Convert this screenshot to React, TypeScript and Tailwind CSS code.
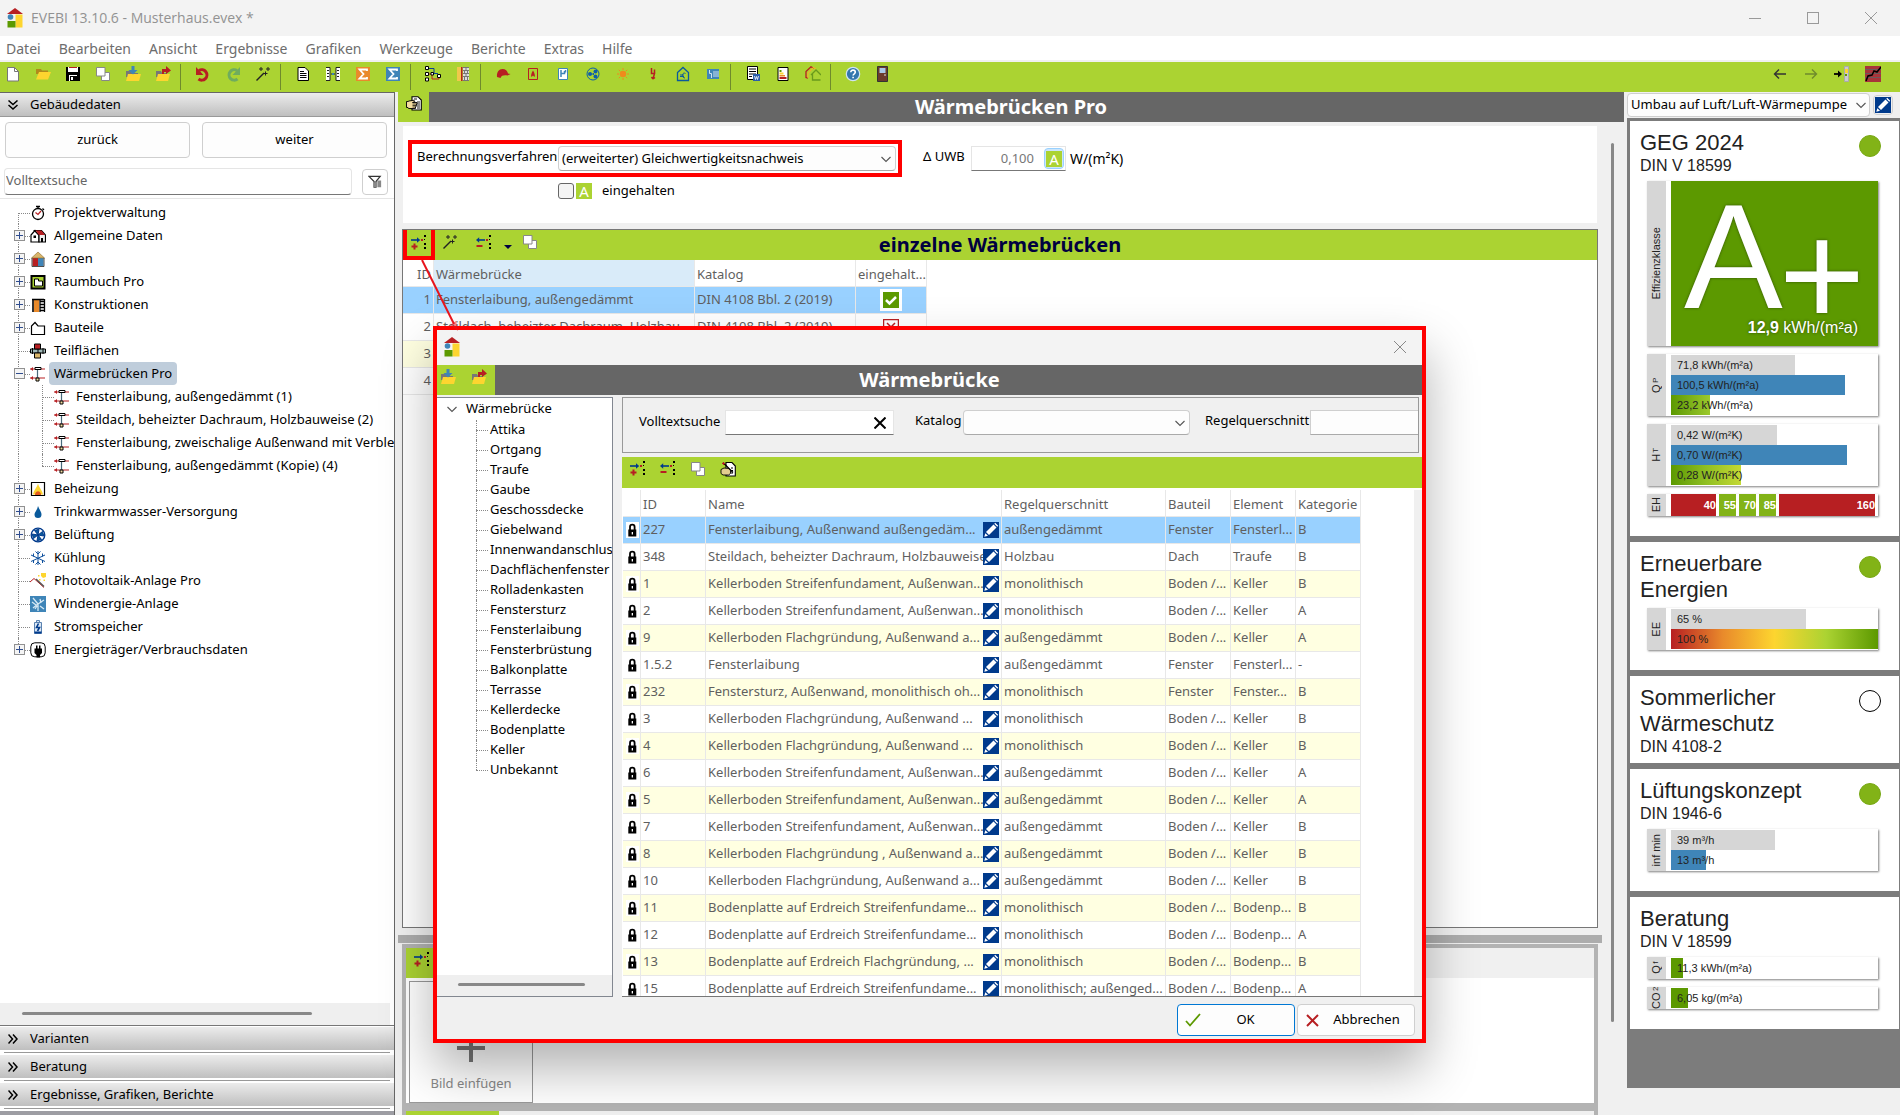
import { useState } from "react";
import type { ReactNode } from "react";
import clsx from "clsx";

const crisp = "crispEdges" as const;

const icons: Record<string, ReactNode> = {
  logo: (
    <>
      <path d="M0 6 8 0l8 6z" fill="#b71f22" />
      <circle cx="3.5" cy="9" r="2.8" fill="#3f85b8" />
      <rect x="8.500" y="6.500" width="7" height="13" fill="#fdd52f" />
      <rect x="0.500" y="13" width="8" height="6.500" fill="#5c9900" />
    </>
  ),
  newDoc: (
    <>
      <path d="M2.500 1.500h7l4 4v9.500h-11z" fill="#fff" stroke="#777" />
      <path d="M9.500 1.500v4h4" fill="none" stroke="#777" />
    </>
  ),
  open: (
    <>
      <path d="M1 3h5l1 1.500h6V8H1z" fill="#b08a1c" />
      <path d="M1 13.500 4 6h12l-3 7.500z" fill="#fdd52f" />
    </>
  ),
  save: (
    <g shapeRendering={crisp}>
      <path d="M1 1h14v14H1z" fill="#000" />
      <path d="M3 1h10v5H3z" fill="#fff" />
      <path d="M4 1h8v1H4z" fill="#b71f22" />
      <path d="M4 9h8v6H4z" fill="#fff" />
      <path d="M5 10h7v5H5z" fill="#000" />
      <path d="M6 11h2v3H6z" fill="#fff" />
    </g>
  ),
  copy: (
    <>
      <path d="M6.500 6.500h8v8h-8z" fill="#fff" stroke="#888" />
      <path d="M1.500 1.500h8.500v8.500H1.500z" fill="#fff" stroke="#888" />
    </>
  ),
  importFile: (
    <>
      <path d="M1 5h5l1 2h6v4H1z" fill="#777" />
      <path d="M1 15 3 8h13l-2 7z" fill="#fdd52f" />
      <path d="M6.500 0h3v4h3L8 8.500 3.500 4h3z" fill="#3f85b8" />
    </>
  ),
  exportFile: (
    <>
      <path d="M1 5h5l1 2h5v4H1z" fill="#777" />
      <path d="M1 15 3 8h12l-2 7z" fill="#fdd52f" />
      <path d="M7 8V3h4V0l5 4.500L11 8V6H9v2z" fill="#b71f22" />
    </>
  ),
  undo: (
    <>
      <path d="M4 4.500a5.200 5.200 0 1 1-.5 8.500" fill="none" stroke="#b71f22" strokeWidth="3" />
      <path d="M1 1v8h7.500z" fill="#b71f22" />
    </>
  ),
  redo: (
    <>
      <path d="M12 4.500a5.200 5.200 0 1 0 .5 8.500" fill="none" stroke="#6fac5e" strokeWidth="3" />
      <path d="M15 1v8H7.500z" fill="#6fac5e" />
    </>
  ),
  wand: (
    <g stroke="#222">
      <path d="M1.500 14.500 9 7" strokeWidth="1.500" />
      <path d="M10.500 5.500v4M8.500 7.500h4M6 1v4M4 3h4M13 1v4M11 3h4" strokeWidth="1" />
    </g>
  ),
  doc: (
    <>
      <path d="M3 1.500h7l3.500 3.500v9.500H3z" fill="#fff" stroke="#000" />
      <path d="M5 5.500h4M5 7.500h6.500M5 9.500h6.500M5 11.500h6.500" stroke="#000" />
    </>
  ),
  compare: (
    <>
      <path d="M1 1.500h4v13H1M15 1.500h-4v13h4" fill="#fff" stroke="#222" />
      <path d="M2 4.500h2M2 7.500h2M2 10.500h2M12 4.500h2M12 7.500h2M12 10.500h2M6 8h4" stroke="#222" />
      <path d="M7 7h2v2H7z" fill="#3f85b8" />
    </>
  ),
  sumOrange: (
    <>
      <path d="M1 1h14v14H1z" fill="#e98a2b" />
      <path d="M12 5V3.500H4.500L8.500 8l-4 4.500H12V11" fill="none" stroke="#fff" strokeWidth="1.800" />
    </>
  ),
  sumBlue: (
    <>
      <path d="M1 1h14v14H1z" fill="#3f85b8" />
      <path d="M12 5V3.500H4.500L8.500 8l-4 4.500H12V11" fill="none" stroke="#fff" strokeWidth="1.800" />
    </>
  ),
  nodes: (
    <>
      <path d="M4 2.500h5v5h4" fill="none" stroke="#0a3f8f" />
      <path d="M4 8h3v5h7v-2" fill="none" stroke="#b71f22" />
      <g fill="#fff" stroke="#000">
        <path d="M.5.500h3v3h-3zM.5 6.500h3v3h-3zM.5 12h3v3h-3zM6 6.500h2.500V9H6zM12.500 8.500h3v3h-3z" />
      </g>
    </>
  ),
  wall: (
    <>
      <path d="M2 1h4v14H2z" fill="#f1c84b" />
      <path d="M6 1h1.500v14H6z" fill="#b71f22" />
      <path d="M8 1h6v14H8z" fill="#ddd" />
      <path d="M8 1.500h6M8 4.500h6M8 7.500h6M8 10.500h6M8 14.500h6M11 2v2M9.500 5v2M12.500 5v2M11 8v2M9.500 11v3M12.500 11v3" stroke="#777" />
    </>
  ),
  cap: <path d="M2 11c-.5-4 1.500-8 5.500-8 3 0 5 1.800 5.500 4.500l2.500.5-3 1.500c-4-.5-6 0-7 2.500z" fill="#b71f22" />,
  fire: (
    <>
      <path d="M3.500 2.500h9v11h-9z" fill="none" stroke="#b71f22" />
      <path d="M8 4.500c1.500 2.500 2.500 5 1.500 6.500L8 9.500 6.500 11C5.500 9.500 6.500 7 8 4.500z" fill="#b71f22" />
    </>
  ),
  tap: (
    <>
      <path d="M3.500 2.500h9v11h-9z" fill="#fff" stroke="#3f85b8" />
      <path d="M6 4v7M6 7.500h3.500V5M10.500 4v2.500" fill="none" stroke="#3f85b8" strokeWidth="1.500" />
    </>
  ),
  vent: (
    <>
      <circle cx="8" cy="8" r="6" fill="none" stroke="#0d5fa8" />
      <circle cx="10.500" cy="5.500" r="2" fill="#0d5fa8" />
      <circle cx="10.500" cy="10.500" r="2" fill="#0d5fa8" />
      <circle cx="5" cy="8" r="2" fill="#0d5fa8" />
      <path d="M5 8h3l2.500-2.500M8 8l2.500 2.500" fill="none" stroke="#0d5fa8" />
    </>
  ),
  sun: (
    <>
      <circle cx="8" cy="8" r="3.200" fill="#f08a1c" />
      <path d="M8 2v2M8 12v2M2 8h2M12 8h2M3.800 3.800l1.400 1.400M10.800 10.800l1.400 1.400M3.800 12.200l1.400-1.400M10.800 5.200l1.400-1.400" stroke="#f08a1c" />
    </>
  ),
  bolt: <path d="M6.500 2v5.500h3L8 13M8 13l-1.500-2M8 13l2-1.500M9.500 3.500v4" fill="none" stroke="#b71f22" strokeWidth="1.500" />,
  euroHouse: (
    <>
      <path d="M2.500 6.500 8 1.500l5.500 5v8h-11z" fill="none" stroke="#0a5a9c" strokeWidth="1.300" />
      <path d="M10.500 7.500c-3-2-5 4-.5 4.500M5 9h4M5 10.500h4" fill="none" stroke="#0a5a9c" />
    </>
  ),
  meter: (
    <>
      <path d="M2 3h12v10H2z" fill="#3f85b8" />
      <path d="M4.500 4v3.500h2V12M9 5v6M11 5v6M13 5v6" fill="none" stroke="#cfe3f2" />
    </>
  ),
  report: (
    <>
      <path d="M2.500.500h10v13h-10z" fill="#fff" stroke="#000" />
      <path d="M4 3h7M4 5.500h7M4 8h7M4 10.500h3" stroke="#000" />
      <path d="M8 8h7v7H8z" fill="#2c5fa8" />
      <path d="m9.500 10 1 3.500 1-3 1 3 1-3.500" fill="none" stroke="#fff" strokeWidth=".8" />
    </>
  ),
  label: (
    <>
      <path d="M3 1.500h10v13H3z" fill="#fff" stroke="#000" />
      <path d="M4.500 4h2v2h-2z" fill="#5c9900" />
      <path d="M4.500 6.500h4v2h-4z" fill="#fdd52f" />
      <path d="M4.500 9h5.500v1.500H4.500z" fill="#e98a2b" />
      <path d="M4.500 11h7v2h-7z" fill="#b71f22" />
    </>
  ),
  houses: (
    <>
      <path d="M9 2.500 6 .8 1 5.500v6l2 .5" fill="none" stroke="#b71f22" strokeWidth="1.300" />
      <path d="M11 3 8.500 1.500 3 7v5" fill="none" stroke="#e9b52b" strokeWidth="1.300" />
      <path d="m6 9 5-5 5 5M7.500 8v6h8" fill="none" stroke="#6a9b1c" strokeWidth="1.300" />
    </>
  ),
  help: (
    <>
      <circle cx="8" cy="8" r="6.700" fill="#3477ae" stroke="#cfe3f2" strokeWidth="1.200" />
      <path d="M5.800 6.300c0-3 4.500-2.800 4.500 0 0 1.500-2.200 1.500-2.200 3.200M8.100 10.800v1.500" fill="none" stroke="#fff" strokeWidth="1.600" />
    </>
  ),
  door: (
    <>
      <path d="M2.500.500h10v15h-10z" fill="#6b3a2c" stroke="#333" />
      <path d="M4.500 2h6v5h-6z" fill="#a9c8e8" />
      <path d="M9 9h2" stroke="#ddd" />
    </>
  ),
  left: <path d="M14 8H2.500M7 3.500 2.500 8 7 12.500" fill="none" stroke="#333" strokeWidth="1.400" />,
  right: <path d="M2 8h11.500M9 3.500l4.500 4.500L9 12.500" fill="none" stroke="#6f8a2c" strokeWidth="1.400" />,
  toPanel: (
    <>
      <path d="M0 8h5" stroke="#000" strokeWidth="1.800" />
      <path d="M4 4.500 8 8l-4 3.500z" fill="#000" />
      <path d="M10.500.500h4v15h-4z" fill="#ccc" stroke="#aaa" />
      <path d="M11 3h3v4h-3z" fill="#fdd52f" />
      <path d="M11 8h2v2h-2z" fill="#5c9900" />
    </>
  ),
  chart: (
    <>
      <path d="M0 0h16v16H0z" fill="#a8343a" />
      <path d="M0 3.500h16M0 7.500h16M0 11.500h16" stroke="#6b5a5a" />
      <path d="m1 15 2-5 4-1 2-4 3 1 4-5" fill="none" stroke="#000" strokeWidth="1.500" />
    </>
  ),
  hand: (
    <>
      <path d="M6 .700h6L15.300 4v10H6z" fill="#fff" stroke="#000" strokeWidth="1.100" />
      <path d="M8 3h3M11 6h3M11 8h3M11 10h3M11 12h3" stroke="#000" strokeWidth=".9" />
      <path d="M.5 5.500h1.500l1-.5 5-.8.800 1.300-2.300 1H11v1.500h-.5v1.500h-.5v1.500h-.5v1.500h-7L2 11.500H.5z" fill="#f3dca0" stroke="#000" strokeWidth=".9" />
      <path d="M6.500 8h4M6.500 9.500h3.500M6.500 11h3" stroke="#000" strokeWidth=".7" />
    </>
  ),
  handEdit: (
    <>
      <path d="M6 1.500h6L15.300 5v10H6z" fill="#fff" stroke="#000" strokeWidth="1.100" />
      <path d="M11 7h3M11 9.500h3M11 12h3" stroke="#000" strokeDasharray="2 1" />
      <path d="M1 8.500 4 7l5 .5 1.500 2v3l-2 1.500H3l-2-1.500z" fill="#e3cd8f" stroke="#000" strokeWidth=".9" />
      <path d="m3 1.500 10 10" stroke="#000" strokeWidth="1.300" />
      <path d="M2 2.500h3M3.500 1v3" stroke="#b71f22" />
    </>
  ),
  add: (
    <g>
      <path d="M0 5h7" stroke="#003a8c" strokeWidth="1.600" />
      <path d="M6 2.200v5.600L9.200 5z" fill="#003a8c" />
      <path d="M.5 11.500h6M3.500 8.500v6" stroke="#b71f22" strokeWidth="2" />
      <path d="M10 4h2v2h-2z" fill="#b71f22" />
      <path d="M13 0h2v2h-2zM13 4h1v1h-1zM13 8h2v2h-2zM13 12h2v2h-2z" fill="#000" />
    </g>
  ),
  remove: (
    <g>
      <path d="M2 5h7" stroke="#003a8c" strokeWidth="1.600" />
      <path d="M3.200 2.200v5.600L0 5z" fill="#003a8c" />
      <path d="M.5 11h6" stroke="#b71f22" strokeWidth="2" />
      <path d="M10 4h2v2h-2z" fill="#b71f22" />
      <path d="M13 0h2v2h-2zM13 4h1v1h-1zM13 8h2v2h-2zM13 12h2v2h-2z" fill="#000" />
    </g>
  ),
  stopwatch: (
    <>
      <circle cx="8" cy="9" r="5.500" fill="#fff" stroke="#000" strokeWidth="1.300" />
      <path d="M6 1.500h4M8 1v3M12.500 3.500l1.500 1.500" stroke="#000" strokeWidth="1.300" />
      <path d="m5.500 7.500 2.500 2 3-3.500" fill="none" stroke="#b71f22" strokeWidth="1.200" />
    </>
  ),
  house: (
    <>
      <path d="M1 14V7l4-4.500L9 7v7z" fill="#fff" stroke="#000" strokeWidth="1.200" />
      <path d="M4.500 2.500h7L15.500 7v7H9V7z" fill="#eee" stroke="#000" strokeWidth="1.200" />
      <path d="M5.500 2.500h6L15 7H9z" fill="#b71f22" />
      <path d="M3.500 7.500h2.500v2.500H3.500zM11 10h2v4h-2z" fill="#000" />
    </>
  ),
  zone: (
    <>
      <path d="M2.500 6H8v9H2.500z" fill="#b71f22" />
      <path d="M8 6h5.500v9H8z" fill="#3f85b8" />
      <path d="M1.500 7 8 1l6.500 6z" fill="#d9b56a" stroke="#8c6a2a" strokeWidth=".6" />
      <path d="M2 7v8.500h12V7" fill="none" stroke="#222" strokeWidth=".8" />
    </>
  ),
  room: (
    <>
      <path d="M1.500 2h13v12.500h-13z" fill="#abd332" stroke="#000" strokeWidth="2" />
      <path d="M4.500 5h4v2h4v5h-8z" fill="#fff" stroke="#000" />
    </>
  ),
  construction: (
    <>
      <path d="M2 2h2v13H2z" fill="#333" />
      <path d="M4 3h5v12H4z" fill="#e98a2b" />
      <path d="M10 2v13M14.500 2v13M10 4.500h4M10 7.500h4M10 10.500h4M10 13.500h4M2 2.500h12" stroke="#000" strokeWidth="1.300" fill="none" />
    </>
  ),
  part: <path d="M1.500 14.500V6L5 2.500 8 6h6.500v8.500z" fill="#fff" stroke="#000" strokeWidth="1.200" />,
  cross: (
    <>
      <path d="M.5 6h15v4H.5z" fill="#9fb8b8" stroke="#000" />
      <path d="M4.500 1h6v5h-6z" fill="#b71f22" stroke="#000" />
      <path d="M4.500 10h6v5h-6z" fill="#d9b56a" stroke="#000" />
      <path d="M2.500 5v6M8 6v4M13 5v6" stroke="#000" />
    </>
  ),
  bridge: (
    <>
      <path d="M0 3h15M0 12h15" stroke="#b71f22" strokeWidth="1.200" />
      <path d="M3 1 .500 3 3 5zM3 10 .500 12 3 14z" fill="#b71f22" />
      <path d="M7.500 4v8" stroke="#4a6a7c" strokeWidth="1.200" />
      <path d="M5 1.500h6v2H5z" fill="#fff" stroke="#000" />
      <path d="M6 12h3v3H6z" fill="#f3dca0" stroke="#000" />
    </>
  ),
  heat: (
    <>
      <path d="M1.500 1.500h13v13h-13z" fill="#fff" stroke="#000" strokeWidth="1.200" />
      <path d="M8 2.500c1 4 4 6 5 11H3c1-5 4-7 5-11z" fill="#fdd52f" />
      <path d="M5 14c0-5 6-5 6 0z" fill="#e25a1c" />
    </>
  ),
  drop: <path d="M8 2c2 5 3.500 6 3.500 8.500a3.500 3.500 0 0 1-7 0C4.500 8 7 7 8 2z" fill="#0a5a9c" />,
  fan: (
    <>
      <circle cx="8" cy="8" r="6.800" fill="#fff" stroke="#003a8c" strokeWidth="1.300" />
      <path d="M8 8 4.500 3.500 9 2.200zM8 8l4.500-3.500L13.800 9zM8 8l3.500 4.500L7 13.800zM8 8l-4.500 3.500L2.200 7z" fill="#0a5a9c" stroke="#003a8c" />
    </>
  ),
  snow: <path d="M8 1v14M1 5l14 6.500M1 11.500 15 5M5.500 1.500 8 4l2.500-2.500M5.500 14.500 8 12l2.500 2.500M3.500 3.500v3M12.500 3.500v3M3.500 10v3M12.500 10v3" fill="none" stroke="#0d4f9c" />,
  pv: (
    <>
      <path d="M0 9 4 5.500l10 9" fill="none" stroke="#b71f22" />
      <path d="m6 6 8 7.500" stroke="#555" strokeWidth="1.500" />
      <path d="M11 0h5v4l-3 1-2-2zM8 2h1.500v1.500H8zM9 6h1.500v1.500H9zM13.500 6.500H15V8h-1.500z" fill="#fdd52f" />
    </>
  ),
  wind: (
    <>
      <path d="M0 0h16v16H0z" fill="#3f85b8" />
      <path d="M8 8 3 2M8 8l6-4M8 8l-5 4M8 8v7M2 6l4 3M10 3l1 4M10 10l4 3M5 13l2-3" stroke="#d6e8f4" strokeWidth="1.300" />
    </>
  ),
  battery: (
    <>
      <path d="M4.500 3.500h7v11h-7zM6.500 1.500h3v2h-3z" fill="#dbe8f5" stroke="#5a82b0" />
      <path d="m8.500 4.500-2 4h3l-2 3.500" fill="none" stroke="#003a8c" strokeWidth="1.600" />
      <path d="M4.500 12.500h7v2h-7z" fill="#003a8c" />
    </>
  ),
  plug: (
    <>
      <rect x=".8" y=".8" width="14.400" height="14" rx="4" fill="#fff" stroke="#000" />
      <path d="M6 3.500h1.500v3H6zM9 3.500h1.500v3H9zM4.500 6.500H12V11l-2 2v2.500H6.500V13l-2-2z" fill="#000" />
    </>
  ),
  lock: (
    <>
      <path d="M6 8V5a2.300 2.300 0 0 1 4.600 0v3" fill="none" stroke="#000" strokeWidth="1.800" />
      <path d="M4.300 7.500h8v7h-8z" fill="#000" />
      <path d="M7.700 10h1.300v2.500H7.700z" fill="#fff" />
    </>
  ),
  pencil: (
    <>
      <path d="M0 0h16v16H0z" fill="#003a8c" />
      <path d="m3 10 7.500-7.500 3 3L6 13z" fill="#fff" />
      <path d="m11.300 1.700.9-.9 3 3-.9.900zM1.300 14.800l1-3.600L5 13.800z" fill="#fff" />
    </>
  ),
  filter: (
    <>
      <path d="M1 2.500h12L8.500 8v6H6.500V8z" fill="#fff" stroke="#333" strokeWidth="1.300" />
      <path d="M6 9h3v5H6zM10 7h4v7h-4z" fill="#888" />
    </>
  ),
};

type IconProps = { name: string; className?: string; box?: string };

function Icon({ name, className = "size-4", box = "0 0 16 16" }: IconProps) {
  return (
    <svg viewBox={box} className={clsx("shrink-0", className)} aria-hidden="true">
      {icons[name]}
    </svg>
  );
}

function Chevron({ className }: { className?: string }) {
  return (
    <svg viewBox="0 0 10 10" className={clsx("pointer-events-none size-[10px]", className)} aria-hidden="true">
      <path d="m.5 3 4.500 4.500L9.500 3" fill="none" stroke="#555" strokeWidth="1.100" />
    </svg>
  );
}

const menu = ["Datei", "Bearbeiten", "Ansicht", "Ergebnisse", "Grafiken", "Werkzeuge", "Berichte", "Extras", "Hilfe"];

const toolbar = [
  ["newDoc", "open", "save", "copy", "importFile", "exportFile"],
  ["undo", "redo", "wand"],
  ["doc", "compare", "sumOrange", "sumBlue"],
  ["nodes", "wall"],
  ["cap", "fire", "tap", "vent", "sun", "bolt", "euroHouse", "meter"],
  ["report", "label", "houses"],
  ["help", "door"],
];

function TitleBar() {
  return (
    <header className="flex h-9 shrink-0 items-center bg-[#f3f3f3] pl-[7px] font-['Open_Sans',sans-serif] text-sm text-[#929292]">
      <Icon name="logo" box="0 0 16 20" className="h-5 w-4" />
      <span className="ml-2 flex-1">EVEBI 13.10.6 - Musterhaus.evex *</span>
      <button aria-label="Minimieren" className="grid h-9 w-[58px] place-items-center">
        <span className="h-px w-3 bg-[#999]" />
      </button>
      <button aria-label="Maximieren" className="grid h-9 w-[58px] place-items-center">
        <span className="size-3 border border-[#999]" />
      </button>
      <button aria-label="Schließen" className="grid h-9 w-[58px] place-items-center">
        <svg viewBox="0 0 12 12" className="size-3">
          <path d="m0 0 12 12M12 0 0 12" stroke="#999" />
        </svg>
      </button>
    </header>
  );
}

function Toolbar() {
  return (
    <div className="flex h-[30px] shrink-0 justify-between bg-[#abd332]">
      <div className="-ml-[2px] flex">
        {toolbar.map((group, i) => (
          <div key={i} className="flex">
            {i > 0 && <span className="ml-[2px] mr-[7px] mt-[2px] h-[26px] w-px bg-[#6f8a2c]" />}
            {group.map((name) => (
              <button key={name} aria-label={name} className="flex w-[30px] justify-center pt-1">
                <Icon name={name} />
              </button>
            ))}
          </div>
        ))}
      </div>
      <div className="mr-3 flex">
        {["left", "right", "toPanel", "chart"].map((name) => (
          <button key={name} aria-label={name} className="flex w-[31px] justify-center pt-1">
            <Icon name={name} />
          </button>
        ))}
      </div>
    </div>
  );
}

type TreeItem = { label: string; icon: string; open?: "plus" | "minus"; children?: string[] };

const tree: TreeItem[] = [
  { label: "Projektverwaltung", icon: "stopwatch" },
  { label: "Allgemeine Daten", icon: "house", open: "plus" },
  { label: "Zonen", icon: "zone", open: "plus" },
  { label: "Raumbuch Pro", icon: "room", open: "plus" },
  { label: "Konstruktionen", icon: "construction", open: "plus" },
  { label: "Bauteile", icon: "part", open: "plus" },
  { label: "Teilflächen", icon: "cross" },
  {
    label: "Wärmebrücken Pro",
    icon: "bridge",
    open: "minus",
    children: [
      "Fensterlaibung, außengedämmt (1)",
      "Steildach, beheizter Dachraum, Holzbauweise (2)",
      "Fensterlaibung, zweischalige Außenwand mit Verbler",
      "Fensterlaibung, außengedämmt (Kopie) (4)",
    ],
  },
  { label: "Beheizung", icon: "heat", open: "plus" },
  { label: "Trinkwarmwasser-Versorgung", icon: "drop", open: "plus" },
  { label: "Belüftung", icon: "fan", open: "plus" },
  { label: "Kühlung", icon: "snow" },
  { label: "Photovoltaik-Anlage Pro", icon: "pv" },
  { label: "Windenergie-Anlage", icon: "wind" },
  { label: "Stromspeicher", icon: "battery" },
  { label: "Energieträger/Verbrauchsdaten", icon: "plug", open: "plus" },
];

function Guide({ first, last }: { first?: boolean; last?: boolean }) {
  return (
    <span className="relative h-full w-3 shrink-0">
      <span
        className={clsx(
          "absolute left-0 border-l border-dotted border-[#888]",
          first ? "top-1/2" : "top-0",
          last ? "bottom-1/2" : "bottom-0"
        )}
      />
      <span className="absolute left-0 right-0 top-1/2 border-t border-dotted border-[#888]" />
    </span>
  );
}

function TreeRow({ item, first, last }: { item: TreeItem; first: boolean; last: boolean }) {
  const selected = item.open === "minus";
  return (
    <li>
      <div className="relative flex h-[23px] items-center pl-[18px]">
        <Guide first={first} last={last} />
        {item.open && (
          <button
            aria-label={item.open === "plus" ? "Aufklappen" : "Zuklappen"}
            className="absolute left-[14px] top-[6px] grid size-[11px] place-items-center border border-[#919191] bg-[#f4f4f4]"
          >
            <svg viewBox="0 0 7 7" className="size-[7px]">
              <path d={item.open === "plus" ? "M0 3.500h7M3.500 0v7" : "M0 3.500h7"} stroke="#2f4d8f" />
            </svg>
          </button>
        )}
        <Icon name={item.icon} />
        <span className={clsx("ml-[3px] rounded-sm px-[5px] leading-[23px]", selected && "bg-[#bfcddb]")}>{item.label}</span>
      </div>
      {item.children && (
        <ul>
          {item.children.map((c, i) => (
            <li key={c} className="relative flex h-[23px] items-center pl-[42px]">
              <span className="absolute inset-y-0 left-[18px] border-l border-dotted border-[#888]" />
              <Guide last={i === item.children!.length - 1} />
              <Icon name="bridge" />
              <span className="ml-[6px] whitespace-nowrap">{c}</span>
            </li>
          ))}
        </ul>
      )}
    </li>
  );
}

function DoubleChevron({ down }: { down?: boolean }) {
  return (
    <svg viewBox="0 0 10 10" className={clsx("size-[10px]", down && "rotate-90")} aria-hidden="true">
      <path d="m.5.500 4 4.500-4 4.500M5 .500 9 5 5 9.500" fill="none" stroke="#000" strokeWidth="1.500" />
    </svg>
  );
}

function SidebarHeader({ label, down }: { label: string; down?: boolean }) {
  return (
    <button className="flex h-[23px] w-full items-center bg-linear-to-b from-[#ececec] to-[#bfbfbf] pl-2 text-left">
      <DoubleChevron down={down} />
      <span className="ml-3">{label}</span>
    </button>
  );
}

function Sidebar() {
  return (
    <aside className="flex w-[395px] shrink-0 flex-col overflow-hidden border-r border-t border-[#666] bg-white">
      <div className="border-b border-[#999]">
        <SidebarHeader label="Gebäudedaten" down />
      </div>
      <div className="grid grid-cols-2 gap-3 px-[5px] pr-[7px] pt-[5px]">
        <button className="h-9 rounded border border-[#cfcfcf] bg-[#fdfdfd]">zurück</button>
        <button className="h-9 rounded border border-[#cfcfcf] bg-[#fdfdfd]">weiter</button>
      </div>
      <div className="flex items-center gap-[10px] px-1 pb-[3px] pr-[6px] pt-[10px]">
        <input
          aria-label="Volltextsuche"
          placeholder="Volltextsuche"
          className="h-[27px] min-w-0 flex-1 rounded-sm border border-b-[#777] border-[#e5e5e5] px-px pb-1 outline-none placeholder:text-[#666]"
        />
        <button aria-label="Filter" className="grid size-[26px] place-items-center rounded border border-[#cfcfcf]">
          <Icon name="filter" className="size-[15px]" />
        </button>
      </div>
      <div className="flex flex-1 flex-col overflow-hidden border-b border-t border-b-[#777] border-t-[#e5e5e5]">
        <ul className="flex-1 overflow-hidden pt-[2px]">
          {tree.map((item, i) => (
            <TreeRow key={item.label} item={item} first={i === 0} last={i === tree.length - 1} />
          ))}
        </ul>
        <div className="mr-1 h-[22px] bg-[#efefef] pl-[22px] pt-[9px]">
          <div className="h-[3px] w-[290px] rounded bg-[#888]" />
        </div>
      </div>
      {["Varianten", "Beratung", "Ergebnisse, Grafiken, Berichte"].map((label) => (
        <div key={label} className="mt-px shrink-0">
          <SidebarHeader label={label} />
          <div className="mx-1 mb-[1px] mt-[2px] h-px bg-[#999]" />
        </div>
      ))}
      <div className="mt-px h-1 shrink-0 bg-[#9d9da3]" />
    </aside>
  );
}

const bridges = [
  { id: 1, name: "Fensterlaibung, außengedämmt", ok: true },
  { id: 2, name: "Steildach, beheizter Dachraum, Holzbau...", ok: false },
  { id: 3, name: "Fensterlaibung, zweischalige Außenwan...", ok: true },
  { id: 4, name: "Fensterlaibung, außengedämmt (Kopie)", ok: true },
];

function StatusBox({ ok }: { ok: boolean }) {
  return (
    <span className="mx-auto grid size-[22px] place-items-center bg-white">
      <svg viewBox="0 0 16 16" className="size-4">
        {ok ? (
          <>
            <path d="M0 0h16v16H0z" fill="#5c9900" />
            <path d="m3 8 3.500 3.500L13 5" fill="none" stroke="#fff" strokeWidth="2.500" />
          </>
        ) : (
          <path d="M.5.500h15v15H.5zM4 4l8 8M12 4l-8 8" fill="#fff" stroke="#b71f22" strokeWidth="1.500" />
        )}
      </svg>
    </span>
  );
}

function BridgeTable() {
  const cell = "overflow-hidden whitespace-nowrap border-b border-r border-[#e8e8e8] px-[2px]";
  return (
    <table className="w-[524px] table-fixed border-separate border-spacing-0 text-left text-[#5f5f5f]">
      <colgroup>
        <col className="w-[31px]" />
        <col className="w-[261px]" />
        <col className="w-[161px]" />
        <col className="w-[71px]" />
      </colgroup>
      <thead>
        <tr className="h-[27px]">
          <th className={clsx(cell, "pt-[3px] text-right font-normal")}>ID</th>
          <th className={clsx(cell, "bg-[#d9ebf9] pt-[3px] font-normal")}>Wärmebrücke</th>
          <th className={clsx(cell, "pt-[3px] font-normal")}>Katalog</th>
          <th className={clsx(cell, "pt-[3px] font-normal")}>eingehalt...</th>
        </tr>
      </thead>
      <tbody>
        {bridges.map((b) => (
          <tr key={b.id} className={clsx("h-[27px]", b.id === 1 && "bg-[#99d1ff]", b.id === 3 && "bg-[#ffffe1]")}>
            <td className={clsx(cell, "text-right")}>{b.id}</td>
            <td className={cell}>{b.name}</td>
            <td className={cell}>DIN 4108 Bbl. 2 (2019)</td>
            <td className={cell}>
              <StatusBox ok={b.ok} />
            </td>
          </tr>
        ))}
      </tbody>
    </table>
  );
}

function CalculationForm() {
  const [kept, setKept] = useState(false);
  return (
    <section className="mx-[5px] mt-1 h-[97px] shrink-0 bg-white pl-[5px] pt-[14px]">
      <div className="flex items-center">
        <div className="flex h-[37px] w-[494px] items-center border-4 border-[#f00] pl-[5px] pr-[2px]">
          <label htmlFor="method" className="w-[141px] pb-1">
            Berechnungsverfahren
          </label>
          <div className="relative flex-1">
            <select
              id="method"
              className="h-[25px] w-full appearance-none rounded-sm border border-[#cfcfcf] border-b-[#aaa] bg-[#fdfdfd] px-[3px]"
            >
              <option>(erweiterter) Gleichwertigkeitsnachweis</option>
            </select>
            <Chevron className="absolute right-[5px] top-2" />
          </div>
        </div>
        <label htmlFor="uwb" className="ml-[21px] w-12 pb-1">
          Δ UWB
        </label>
        <div className="flex h-[25px] w-[95px] items-center border border-[#e5e5e5] border-b-[#777] pr-px">
          <input id="uwb" defaultValue="0,100" className="w-full min-w-0 pr-[10px] text-right text-[#777] outline-none" />
          <button className="grid h-[21px] w-5 shrink-0 place-items-center rounded-sm border border-[#99d1ff] bg-[#cce6fb]">
            <span className="h-4 w-4 bg-[#abd332] text-center text-[15px] leading-4 text-white">A</span>
          </button>
        </div>
        <span className="ml-1 text-sm">W/(m²K)</span>
      </div>
      <div className="ml-[150px] mt-1 flex items-center">
        <input
          id="kept"
          type="checkbox"
          checked={kept}
          onChange={(e) => setKept(e.target.checked)}
          className="size-4 appearance-none rounded-[3px] border border-[#666] bg-[#f4f4f4] checked:bg-[#5c9900]"
        />
        <span className="ml-[2px] size-4 bg-[#abd332] text-center text-[15px] leading-4 text-white">A</span>
        <label htmlFor="kept" className="ml-[10px]">
          eingehalten
        </label>
      </div>
    </section>
  );
}

function Main() {
  return (
    <main className="flex min-w-0 flex-1 bg-[#f0f0f0] pl-[3px]">
      <div className="flex min-w-0 flex-1 flex-col">
        <div className="-mr-[22px] grid h-[30px] shrink-0 place-items-center bg-[#666] [grid-template-areas:'a']">
          <button aria-label="Bearbeiten" className="flex h-[30px] w-[31px] justify-center justify-self-start bg-[#abd332] pt-1 [grid-area:a]">
            <Icon name="hand" />
          </button>
          <h1 className="text-xl font-bold text-white [grid-area:a]">Wärmebrücken Pro</h1>
        </div>
        <CalculationForm />
        <section className="mx-1 mt-[6px] flex-1 overflow-hidden border border-[#777] bg-white">
          <div className="grid h-[30px] items-center bg-[#abd332] [grid-template-areas:'a']">
            <div className="flex items-start self-start [grid-area:a]">
              <button
                aria-label="Hinzufügen"
                className="-mt-1 flex h-[34px] w-8 justify-center border-4 border-[#f00] pt-[5px]"
              >
                <Icon name="add" />
              </button>
              <button aria-label="Assistent" className="ml-[7px] pt-1">
                <Icon name="wand" />
              </button>
              <button aria-label="Entfernen" className="ml-[18px] pt-[5px]">
                <Icon name="remove" />
              </button>
              <span className="ml-3 mt-[15px] border-x-4 border-t-4 border-x-transparent border-t-[#000040]" />
              <button aria-label="Kopieren" className="ml-[10px] pt-1">
                <Icon name="copy" />
              </button>
            </div>
            <h2 className="justify-self-center text-xl font-bold text-[#000040] [grid-area:a]">einzelne Wärmebrücken</h2>
          </div>
          <BridgeTable />
        </section>
        <div className="mt-[7px] h-2 shrink-0 bg-[#adadad]" />
        <section className="mx-1 mt-px shrink-0 border-4 border-b-8 border-[#b3b3b3] bg-white">
          <div className="h-[30px] bg-[#f0f0f0]">
            <div className="h-full w-[93px] bg-[#abd332] pl-2 pt-1">
              <Icon name="add" />
            </div>
          </div>
          <button className="ml-[3px] mt-[3px] flex h-[122px] w-[124px] flex-col items-center justify-end border border-[#999] pb-[9px] text-[#888]">
            <svg viewBox="0 0 28 28" className="mb-3 size-7">
              <path d="M0 14h28M14 0v28" stroke="#777" strokeWidth="4" />
            </svg>
            Bild einfügen
          </button>
        </section>
        <div className="mx-1 h-1 shrink-0 border-x-4 border-[#b3b3b3]">
          <div className="h-1 w-[93px] bg-[#abd332]" />
        </div>
      </div>
      <div className="w-[22px] shrink-0 pb-[93px] pl-[9px] pt-[51px]">
        <div className="h-full w-[3px] rounded bg-[#888]" />
      </div>
    </main>
  );
}

type Bar = { text: string; width: number; color: string };

const grey = "bg-[#d6d6d6]";
const blue = "bg-[#3f85b8]";

function Gauge({ label, sub, bars }: { label: string; sub?: string; bars: Bar[] }) {
  return (
    <div className="ml-[17px] mr-[21px] flex shadow-[1px_1px_2px_rgba(0,0,0,0.5)]">
      <div className="flex w-[19px] items-center justify-center bg-[#d6d6d6]">
        <span className="rotate-180 whitespace-nowrap text-[11px] leading-none [writing-mode:vertical-rl]">
          {label}
          {sub && <span className="ms-px text-[8px]">{sub}</span>}
        </span>
      </div>
      <div className="ml-[5px] flex-1 py-px">
        {bars.map((b) => (
          <div key={b.text} className="relative flex h-5 items-center pl-[6px]">
            <div className={clsx("absolute inset-y-0 left-0", b.color)} style={{ width: `${b.width}%` }} />
            <span className="relative text-[11px]">{b.text}</span>
          </div>
        ))}
      </div>
    </div>
  );
}

type CardProps = { title: string; norm?: string; status?: "ok" | "none"; children?: ReactNode };

function Card({ title, norm, status, children }: CardProps) {
  return (
    <section className={clsx("bg-white pt-[9px]", children ? "pb-5" : "pb-[6px]")}>
      <div className="flex justify-between pl-[10px] pr-[18px]">
        <div>
          <h3 className="max-w-44 text-[22px] leading-[26px]">{title}</h3>
          {norm && <p className="text-base leading-5">{norm}</p>}
        </div>
        {status && (
          <span className={clsx("mt-[5px] size-[22px] rounded-full border", status === "ok" ? "border-[#78a814] bg-[#82b317]" : "border-black")} />
        )}
      </div>
      {children && <div className="mt-[5px] flex flex-col gap-2">{children}</div>}
    </section>
  );
}

const standards = [
  { value: "40", width: 45, color: "bg-[#b71f22]" },
  { value: "55", width: 17, color: "bg-[#82b317]" },
  { value: "70", width: 17, color: "bg-[#82b317]" },
  { value: "85", width: 17, color: "bg-[#82b317]" },
  { value: "160", width: 96, color: "bg-[#b71f22]" },
];

function Results() {
  return (
    <aside className="flex w-[276px] shrink-0 flex-col bg-[#f0f0f0] pb-[27px] pl-[3px]">
      <div className="flex h-[26px] shrink-0 items-center gap-[3px] pr-[7px]">
        <div className="relative flex-1">
          <select aria-label="Variante" className="h-6 w-full appearance-none rounded-sm border border-[#cfcfcf] bg-[#fdfdfd] px-[3px] text-[13px]">
            <option>Umbau auf Luft/Luft-Wärmepumpe</option>
          </select>
          <Chevron className="absolute right-1 top-[7px]" />
        </div>
        <button aria-label="Variante bearbeiten" className="rounded-sm border border-[#cfcfcf] p-px">
          <Icon name="pencil" />
        </button>
      </div>
      <div className="flex flex-1 flex-col gap-[6px] bg-[#7c7c7c] pl-[3px] pr-px pt-[3px] font-['Liberation_Sans',sans-serif] text-[#222]">
        <Card title="GEG 2024" norm="DIN V 18599" status="ok">
          <div className="ml-[17px] mr-[21px] flex h-[165px] shadow-[1px_1px_2px_rgba(0,0,0,0.5)]">
            <div className="flex w-[19px] items-center justify-center bg-[#d6d6d6]">
              <span className="rotate-180 text-[11px] leading-none [writing-mode:vertical-rl]">Effizienzklasse</span>
            </div>
            <div className="ml-[5px] flex flex-1 flex-col bg-[#5c9900] text-white [text-shadow:0_0_3px_rgba(0,0,0,0.5)]">
              <div className="flex h-[137px] pl-[13px] text-[148px] leading-[152px]">
                <span>A</span>
                <span className="-ml-1 pt-[18px]">+</span>
              </div>
              <p className="pr-5 text-right text-base leading-5">
                <b>12,9</b> kWh/(m²a)
              </p>
            </div>
          </div>
          <Gauge
            label="Q"
            sub="P"
            bars={[
              { text: "71,8 kWh/(m²a)", width: 60, color: grey },
              { text: "100,5 kWh/(m²a)", width: 84, color: blue },
              { text: "23,2 kWh/(m²a)", width: 19, color: "bg-linear-to-r from-[#5c9900] to-[#9cc92b]" },
            ]}
          />
          <Gauge
            label="H"
            sub="T"
            bars={[
              { text: "0,42 W/(m²K)", width: 51, color: grey },
              { text: "0,70 W/(m²K)", width: 85, color: blue },
              { text: "0,28 W/(m²K)", width: 34, color: "bg-linear-to-r from-[#5c9900] via-[#8fbf22] to-[#c4d834]" },
            ]}
          />
          <div className="ml-[17px] mr-[21px] flex h-[22px] shadow-[1px_1px_2px_rgba(0,0,0,0.5)]">
            <div className="mr-[5px] flex w-[19px] items-center justify-center bg-[#d6d6d6]">
              <span className="rotate-180 text-[11px] leading-none [writing-mode:vertical-rl]">EH</span>
            </div>
            <div className="flex gap-[3px]">
              {standards.map((s) => (
                <div key={s.value} className={clsx("text-right text-[11px] font-bold leading-[22px] text-white", s.color)} style={{ width: s.width }}>
                  {s.value}
                </div>
              ))}
            </div>
          </div>
        </Card>
        <Card title="Erneuerbare Energien" status="ok">
          <Gauge
            label="EE"
            bars={[
              { text: "65 %", width: 65, color: grey },
              { text: "100 %", width: 100, color: "bg-[linear-gradient(to_right,#b71f22,#e98a2b_25%,#fdd52f_50%,#abd332_75%,#5c9900)]" },
            ]}
          />
        </Card>
        <Card title="Sommerlicher Wärmeschutz" norm="DIN 4108-2" status="none" />
        <Card title="Lüftungskonzept" norm="DIN 1946-6" status="ok">
          <Gauge
            label="inf min"
            bars={[
              { text: "39 m³/h", width: 50, color: grey },
              { text: "13 m³/h", width: 17, color: blue },
            ]}
          />
        </Card>
        <Card title="Beratung" norm="DIN V 18599">
          <Gauge label="Q" sub="f" bars={[{ text: "11,3 kWh/(m²a)", width: 6, color: "bg-[#5c9900]" }]} />
          <Gauge label="CO" sub="2" bars={[{ text: "6,05 kg/(m²a)", width: 8, color: "bg-[#5c9900]" }]} />
        </Card>
      </div>
    </aside>
  );
}

const categories = [
  "Attika",
  "Ortgang",
  "Traufe",
  "Gaube",
  "Geschossdecke",
  "Giebelwand",
  "Innenwandanschluss",
  "Dachflächenfenster",
  "Rolladenkasten",
  "Fenstersturz",
  "Fensterlaibung",
  "Fensterbrüstung",
  "Balkonplatte",
  "Terrasse",
  "Kellerdecke",
  "Bodenplatte",
  "Keller",
  "Unbekannt",
];

const catalog = [
  ["227", "Fensterlaibung, Außenwand außengedäm...", "außengedämmt", "Fenster", "Fensterl...", "B"],
  ["348", "Steildach, beheizter Dachraum, Holzbauweise", "Holzbau", "Dach", "Traufe", "B"],
  ["1", "Kellerboden Streifenfundament, Außenwan...", "monolithisch", "Boden /...", "Keller", "B"],
  ["2", "Kellerboden Streifenfundament, Außenwan...", "monolithisch", "Boden /...", "Keller", "A"],
  ["9", "Kellerboden Flachgründung, Außenwand a...", "außengedämmt", "Boden /...", "Keller", "A"],
  ["1.5.2", "Fensterlaibung", "außengedämmt", "Fenster", "Fensterl...", "-"],
  ["232", "Fenstersturz, Außenwand, monolithisch oh...", "monolithisch", "Fenster", "Fenster...", "B"],
  ["3", "Kellerboden Flachgründung, Außenwand ...", "monolithisch", "Boden /...", "Keller", "B"],
  ["4", "Kellerboden Flachgründung, Außenwand ...", "monolithisch", "Boden /...", "Keller", "B"],
  ["6", "Kellerboden Streifenfundament, Außenwan...", "außengedämmt", "Boden /...", "Keller", "A"],
  ["5", "Kellerboden Streifenfundament, Außenwan...", "außengedämmt", "Boden /...", "Keller", "A"],
  ["7", "Kellerboden Streifenfundament, Außenwan...", "außengedämmt", "Boden /...", "Keller", "B"],
  ["8", "Kellerboden Flachgründung , Außenwand a...", "außengedämmt", "Boden /...", "Keller", "B"],
  ["10", "Kellerboden Flachgründung, Außenwand a...", "außengedämmt", "Boden /...", "Keller", "B"],
  ["11", "Bodenplatte auf Erdreich Streifenfundame...", "monolithisch", "Boden /...", "Bodenp...", "B"],
  ["12", "Bodenplatte auf Erdreich Streifenfundame...", "monolithisch", "Boden /...", "Bodenp...", "A"],
  ["13", "Bodenplatte auf Erdreich Flachgründung, ...", "monolithisch", "Boden /...", "Bodenp...", "B"],
  ["15", "Bodenplatte auf Erdreich Streifenfundame...", "monolithisch; außenged...", "Boden /...", "Bodenp...", "A"],
];

function CatalogTable() {
  const [selected, setSelected] = useState("227");
  const cell = "overflow-hidden whitespace-nowrap border-b border-r border-[#e8e8e8] pb-0 pl-[2px] pr-0";
  return (
    <table className="w-[738px] table-fixed border-separate border-spacing-0 text-left text-[#5f5f5f]">
      <colgroup>
        <col className="w-[18px]" />
        <col className="w-[65px]" />
        <col className="w-[296px]" />
        <col className="w-[164px]" />
        <col className="w-[65px]" />
        <col className="w-[65px]" />
        <col className="w-[65px]" />
      </colgroup>
      <thead>
        <tr className="h-[27px]">
          {["", "ID", "Name", "Regelquerschnitt", "Bauteil", "Element", "Kategorie"].map((h) => (
            <th key={h} className={clsx(cell, "pt-[3px] font-normal")}>
              {h}
            </th>
          ))}
        </tr>
      </thead>
      <tbody>
        {catalog.map(([id, name, section, part, element, category], i) => (
          <tr
            key={id}
            onClick={() => setSelected(id)}
            className={clsx("h-[27px]", id === selected ? "bg-[#99d1ff]" : i > 0 && i % 2 === 0 && "bg-[#ffffe1]")}
          >
            <td className={cell}>
              <Icon name="lock" box="2 0 13 16" className="ml-px h-4 w-[13px] bg-white" />
            </td>
            <td className={cell}>{id}</td>
            <td className={cell}>
              <div className="flex items-center justify-between pr-[2px]">
                <span className="overflow-hidden">{name}</span>
                <Icon name="pencil" />
              </div>
            </td>
            <td className={cell}>{section}</td>
            <td className={cell}>{part}</td>
            <td className={cell}>{element}</td>
            <td className={cell}>{category}</td>
          </tr>
        ))}
      </tbody>
    </table>
  );
}

function CatalogDialog() {
  return (
    <div
      role="dialog"
      aria-label="Wärmebrücke"
      className="absolute left-[433px] top-[326px] flex h-[717px] w-[993px] flex-col border-4 border-[#f00] bg-[#f0f0f0] shadow-[0_26px_48px_rgba(0,0,0,0.3)]"
    >
      <div className="flex h-[35px] shrink-0 items-center justify-between bg-[#f3f3f3] pb-[2px] pl-[7px] pr-4">
        <Icon name="logo" box="0 0 16 20" className="h-5 w-4" />
        <button aria-label="Dialog schließen">
          <svg viewBox="0 0 12 12" className="size-3">
            <path d="m0 0 12 12M12 0 0 12" stroke="#888" />
          </svg>
        </button>
      </div>
      <div className="grid h-[30px] shrink-0 items-center bg-[#666] [grid-template-areas:'a']">
        <div className="flex h-[30px] w-[58px] justify-between self-start bg-[#abd332] pl-[3px] pr-2 pt-1 [grid-area:a]">
          <Icon name="importFile" />
          <Icon name="exportFile" />
        </div>
        <h2 className="justify-self-center text-xl font-bold text-white [grid-area:a]">Wärmebrücke</h2>
      </div>
      <div className="flex min-h-0 flex-1 pt-[2px]">
        <nav className="flex w-[176px] shrink-0 flex-col overflow-hidden border-b border-r border-t border-[#828790] bg-white">
          <div className="flex h-[22px] shrink-0 items-center pl-[10px]">
            <Chevron />
            <span className="ml-[9px]">Wärmebrücke</span>
          </div>
          <ul className="flex-1">
            {categories.map((c, i) => (
              <li key={c} className="flex h-5 items-center overflow-hidden whitespace-nowrap pl-[39px]">
                <Guide last={i === categories.length - 1} />
                <span className="ml-[2px]">{c}</span>
              </li>
            ))}
          </ul>
          <div className="h-[21px] bg-[#efefef] pl-[21px] pt-2">
            <div className="h-[3px] w-[127px] rounded bg-[#888]" />
          </div>
        </nav>
        <div className="ml-[9px] flex min-w-0 flex-1 flex-col">
          <div className="mr-[3px] flex h-[56px] shrink-0 items-start overflow-hidden border border-[#999] pl-4 pt-3">
            <label htmlFor="search" className="w-[86px] pt-[2px]">
              Volltextsuche
            </label>
            <div className="flex h-[25px] w-[169px] items-center border border-[#e5e5e5] border-b-[#777] bg-white pr-[7px]">
              <input id="search" className="w-full min-w-0 outline-none" />
              <svg viewBox="0 0 12 12" className="size-3 shrink-0">
                <path d="m.5.500 11 11M11.500.500l-11 11" stroke="#000" strokeWidth="2" />
              </svg>
            </div>
            <label htmlFor="cat" className="ml-[21px] w-12 pt-px">
              Katalog
            </label>
            <div className="relative w-[227px]">
              <select id="cat" className="h-[25px] w-full appearance-none rounded-sm border border-[#cfcfcf] border-b-[#aaa] bg-[#fdfdfd]" />
              <Chevron className="absolute right-[5px] top-2" />
            </div>
            <label htmlFor="section" className="ml-[15px] w-[105px] shrink-0 pt-px">
              Regelquerschnitt
            </label>
            <select
              id="section"
              className="h-[25px] min-w-0 flex-1 appearance-none border border-r-0 border-[#cfcfcf] border-b-[#aaa] bg-[#fdfdfd]"
            />
          </div>
          <div className="mt-1 flex h-[31px] shrink-0 gap-[14px] bg-[#abd332] pl-2 pt-1">
            <Icon name="add" />
            <Icon name="remove" />
            <Icon name="copy" />
            <Icon name="handEdit" />
          </div>
          <div className="flex min-h-0 flex-1 justify-between overflow-hidden border-b border-[#777] bg-white pl-px pt-[2px]">
            <CatalogTable />
            <div className="w-2 bg-[#f0f0f0]" />
          </div>
        </div>
      </div>
      <div className="flex h-[42px] shrink-0 items-start justify-end gap-[2px] pr-[7px] pt-[7px]">
        <button className="flex h-8 w-[118px] items-center rounded border border-[#0078d4] bg-[#fdfdfd] pl-[7px]">
          <svg viewBox="0 0 16 14" className="h-[14px] w-4">
            <path d="m1 8 4 4.500L15 1" fill="none" stroke="#5c9900" strokeWidth="1.800" />
          </svg>
          <span className="flex-1 pr-1 text-center">OK</span>
        </button>
        <button className="flex h-8 w-[118px] items-center rounded border border-[#cfcfcf] bg-[#fdfdfd] pl-2">
          <svg viewBox="0 0 13 13" className="size-[13px]">
            <path d="m1 1 11 11M12 1 1 12" stroke="#b71f22" strokeWidth="2" />
          </svg>
          <span className="flex-1 text-center">Abbrechen</span>
        </button>
      </div>
    </div>
  );
}

export default function App() {
  return (
    <div className="relative flex h-screen flex-col overflow-hidden bg-white font-['Noto_Sans',sans-serif] text-[13px] text-black">
      <TitleBar />
      <nav className="flex h-[26px] shrink-0 items-center gap-[18px] border-b-2 border-[#f0f0f0] pl-[6px] pt-[2px] text-sm text-[#6d6d6d]">
        {menu.map((m) => (
          <button key={m}>{m}</button>
        ))}
      </nav>
      <Toolbar />
      <div className="flex min-h-0 flex-1">
        <Sidebar />
        <Main />
        <Results />
      </div>
      <CatalogDialog />
      <svg viewBox="0 0 44 76" className="pointer-events-none absolute left-[418px] top-[260px] h-[76px] w-11" aria-hidden="true">
        <path d="M4 0 36 64" stroke="#e8141c" strokeWidth="2" />
        <path d="m40 71-8-6 6-4z" fill="#e8141c" opacity=".5" />
      </svg>
    </div>
  );
}
